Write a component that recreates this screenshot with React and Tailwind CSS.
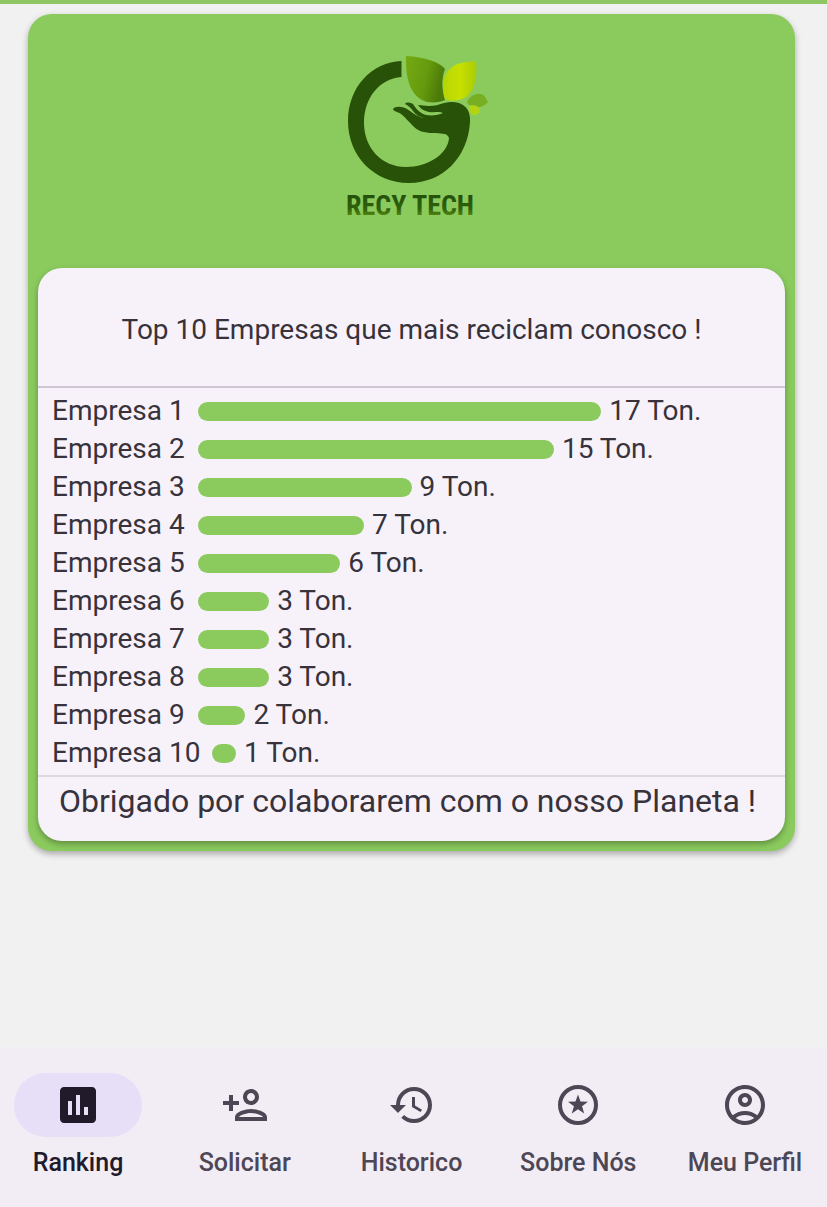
import {
  MdInsertChart,
  MdOutlinePersonAdd,
  MdHistory,
  MdOutlineAccountCircle,
} from "react-icons/md";

const companies = [
  { name: "Empresa 1", tons: 17 },
  { name: "Empresa 2", tons: 15 },
  { name: "Empresa 3", tons: 9 },
  { name: "Empresa 4", tons: 7 },
  { name: "Empresa 5", tons: 6 },
  { name: "Empresa 6", tons: 3 },
  { name: "Empresa 7", tons: 3 },
  { name: "Empresa 8", tons: 3 },
  { name: "Empresa 9", tons: 2 },
  { name: "Empresa 10", tons: 1 },
];

function StarCircle({ className }) {
  return (
    <svg viewBox="0 0 24 24" className={className} fill="currentColor" aria-hidden="true">
      <circle cx="12" cy="12" r="9" fill="none" stroke="currentColor" strokeWidth="2" />
      <path d="M12 6.700L13.250 10.250L17 10.350L14.020 12.650L15.100 16.300L12 14.120L8.900 16.300L9.980 12.650L7 10.350L10.750 10.250Z" />
    </svg>
  );
}

const tabs = [
  { label: "Ranking", href: "#ranking", Icon: MdInsertChart, active: true },
  { label: "Solicitar", href: "#solicitar", Icon: MdOutlinePersonAdd },
  { label: "Historico", href: "#historico", Icon: MdHistory },
  { label: "Sobre Nós", href: "#sobre", Icon: StarCircle },
  { label: "Meu Perfil", href: "#perfil", Icon: MdOutlineAccountCircle },
];

function Logo() {
  return (
    <svg viewBox="-8 0 180 200" className="h-[200px] w-[180px]" role="img" aria-label="Recy Tech">
      <defs>
        <linearGradient id="leafDark" x1="0" y1="0" x2="1" y2="0.3">
          <stop offset="0" stopColor="#74ab12" />
          <stop offset="0.6" stopColor="#659a0e" />
          <stop offset="1" stopColor="#4c7a08" />
        </linearGradient>
        <linearGradient id="leafLight" x1="0" y1="0" x2="1" y2="0">
          <stop offset="0" stopColor="#b4d605" />
          <stop offset="0.5" stopColor="#c9e000" />
          <stop offset="1" stopColor="#a9cc05" />
        </linearGradient>
        <linearGradient id="word" x1="0" y1="0" x2="0" y2="1">
          <stop offset="0.2" stopColor="#24520a" />
          <stop offset="0.6" stopColor="#2f610b" />
          <stop offset="1" stopColor="#7aa814" />
        </linearGradient>
      </defs>
      <path
        d="M71.500 21C42 22 18 47 18 81C18 116 44 143 79 143C113 143 138 117 140 82C141 69 134 62 121 62C113 62 109 66 99 66C95 66 92 65 88 65C91 69 94 71 99 72C105 73 109 71 113 73C109 75 102 76 96 75C90 73 86 69 83 64C79 62 76 62 75 64C79 66 81 68 83 71C86 75 90 77 94 78C87 77 82 72 77 69C72 66 65 66 63 69C64 72 67 71 71 74C75 77 79 82 83 86C88 91 94 93 103 93C110 94 117 92 119 98C118 114 98 127 76 127C52 127 34 108 34 83C34 58 49 39 71.500 37Z"
        fill="#285207"
      />
      <path d="M76 16C94 17 110 22 115 29C111 39 112 50 115 60C111 62 104 63 97 62C83 58 75 43 76 16Z" fill="url(#leafDark)" />
      <path d="M146 21C148 38 144 55 132 59C126 61 119 61 115 59C111 45 113 34 122 27C129 22 137 22 146 21Z" fill="url(#leafLight)" />
      <path d="M137 62C140 55 148 52 153 55C156 57 157 61 158 62C154 67 146 69 141 66C139 65 138 64 137 62Z" fill="#78ae22" />
      <path d="M139 66C144 64 150 66 150 71C149 74 146 75 142 75C140 72 138 69 139 66Z" fill="#b3d414" />
      <text
        x="80"
        y="175"
        textAnchor="middle"
        fill="url(#word)"
        className="font-['Liberation_Sans_Narrow','Roboto_Condensed','DejaVu_Sans_Condensed',sans-serif] text-[28px] font-bold"
      >
        RECY TECH
      </text>
    </svg>
  );
}

function RankingRow({ name, tons }) {
  return (
    <li className="flex items-center text-[28px] leading-[38px] whitespace-nowrap">
      <span className="min-w-[134px]">{name}</span>
      <span
        className="mr-2 ml-3 h-[19px] shrink-0 rounded-full bg-[#8bcb5e]"
        style={{ width: `${tons * 3.3}%` }}
      />
      <span>{tons} Ton.</span>
    </li>
  );
}

export default function App() {
  return (
    <div className="flex min-h-screen flex-col bg-[#f1f1f1] font-[Roboto,sans-serif] text-[#37323b]">
      <header className="h-1 bg-[#8dc663]" />
      <main className="grow pt-[10px] pr-8 pb-8 pl-7">
        <section className="rounded-3xl bg-[#8bcb5e] px-[10px] pb-[10px] shadow-[0_3px_6px_rgba(0,0,0,0.3)]">
          <div className="flex justify-center pt-[26px] pb-7">
            <Logo />
          </div>
          <div className="overflow-hidden rounded-3xl bg-[#f7f2f9] shadow-[0_3px_6px_rgba(0,0,0,0.3)]">
            <h1 className="border-b-2 border-[#cfc5d3] pt-11 pb-[38px] text-center text-[28px] leading-9">
              Top 10 Empresas que mais reciclam conosco !
            </h1>
            <ol className="px-[14px] pt-1 pb-[3px]">
              {companies.map((company) => (
                <RankingRow key={company.name} {...company} />
              ))}
            </ol>
            <p className="border-t-2 border-[#dcd6df] pt-1 pr-2 pb-5 text-center text-[32px] leading-10">
              Obrigado por colaborarem com o nosso Planeta !
            </p>
          </div>
        </section>
      </main>
      <nav className="flex justify-between bg-[#f2ecf5] pt-[26px] pr-[18px] pb-7 pl-[14px]">
        {tabs.map(({ label, href, Icon, active }) => (
          <a
            key={label}
            href={href}
            aria-current={active ? "page" : undefined}
            className={`flex w-32 flex-col items-center gap-[10px] text-[25px] leading-8 font-medium whitespace-nowrap ${
              active ? "text-[#211a2b]" : "text-[#4d4654]"
            }`}
          >
            <span className={`flex h-16 w-full items-center justify-center rounded-full ${active ? "bg-[#e7def8]" : ""}`}>
              <Icon className="size-12" />
            </span>
            {label}
          </a>
        ))}
      </nav>
    </div>
  );
}
